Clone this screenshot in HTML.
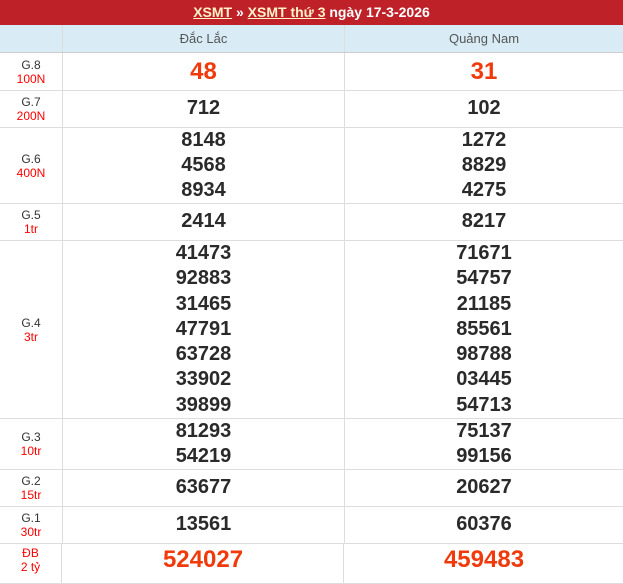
<!DOCTYPE html><html><head><meta charset="utf-8"><style>
body{margin:0;width:623px;height:575px;overflow:hidden;font-family:"Liberation Sans",Arial,sans-serif;background:#fff;position:relative}
.h{position:absolute;left:0;top:0;width:623px;height:25px;background:#bf2128;color:#fff;font-weight:bold;font-size:14px;text-align:center;line-height:24px}
.h a{color:#fff3c8;text-decoration:underline}
.r{position:absolute;left:0;width:623px;border-bottom:1px solid #ddd;box-sizing:border-box}
.c{position:absolute;top:0;bottom:0;display:flex;flex-direction:column;justify-content:center;align-items:center;text-align:center}
.c0{left:0;width:62px;border-right:1px solid #ddd;font-size:12px;color:#333;line-height:14px}
.c1{left:63px;width:281px;border-right:1px solid #ddd}
.c2{left:345px;width:278px}
.c0 span{color:#f00}
.n{font-size:20px;font-weight:bold;color:#2a2a2a;line-height:25.3px}
.big{font-size:24px;font-weight:bold;color:#f03a0c}
</style></head><body>
<div class="h"><a>XSMT</a> » <a>XSMT thứ 3</a> ngày 17-3-2026</div>
<div class="r" style="top:25px;height:28px;background:#d9ecf5;border-bottom:1px solid #ccc"><div class="c c0"></div><div class="c c1" style="font-size:13px;color:#555">Đắc Lắc</div><div class="c c2" style="font-size:13px;color:#555">Quảng Nam</div></div>
<div class="r" style="top:53px;height:38px"><div class="c c0">G.8<span>100N</span></div><div class="c c1 big">48</div><div class="c c2 big">31</div></div>
<div class="r" style="top:91px;height:37px"><div class="c c0">G.7<span>200N</span></div><div class="c c1 n">712</div><div class="c c2 n">102</div></div>
<div class="r" style="top:128px;height:76px"><div class="c c0">G.6<span>400N</span></div><div class="c c1 n">8148<br>4568<br>8934</div><div class="c c2 n">1272<br>8829<br>4275</div></div>
<div class="r" style="top:204px;height:37px"><div class="c c0">G.5<span>1tr</span></div><div class="c c1 n">2414</div><div class="c c2 n">8217</div></div>
<div class="r" style="top:241px;height:178px"><div class="c c0">G.4<span>3tr</span></div><div class="c c1 n">41473<br>92883<br>31465<br>47791<br>63728<br>33902<br>39899</div><div class="c c2 n">71671<br>54757<br>21185<br>85561<br>98788<br>03445<br>54713</div></div>
<div class="r" style="top:419px;height:51px"><div class="c c0">G.3<span>10tr</span></div><div class="c c1 n">81293<br>54219</div><div class="c c2 n">75137<br>99156</div></div>
<div class="r" style="top:470px;height:37px"><div class="c c0">G.2<span>15tr</span></div><div class="c c1 n">63677</div><div class="c c2 n">20627</div></div>
<div class="r" style="top:507px;height:37px"><div class="c c0">G.1<span>30tr</span></div><div class="c c1 n">13561</div><div class="c c2 n">60376</div></div>
<div class="r" style="top:544px;height:40px"><div class="c c0" style="padding-bottom:8px;box-sizing:border-box"><span>ĐB<br>2 tỷ</span></div><div class="c c1 big" style="padding-bottom:8px;box-sizing:border-box">524027</div><div class="c c2 big" style="padding-bottom:8px;box-sizing:border-box">459483</div></div>
</body></html>
